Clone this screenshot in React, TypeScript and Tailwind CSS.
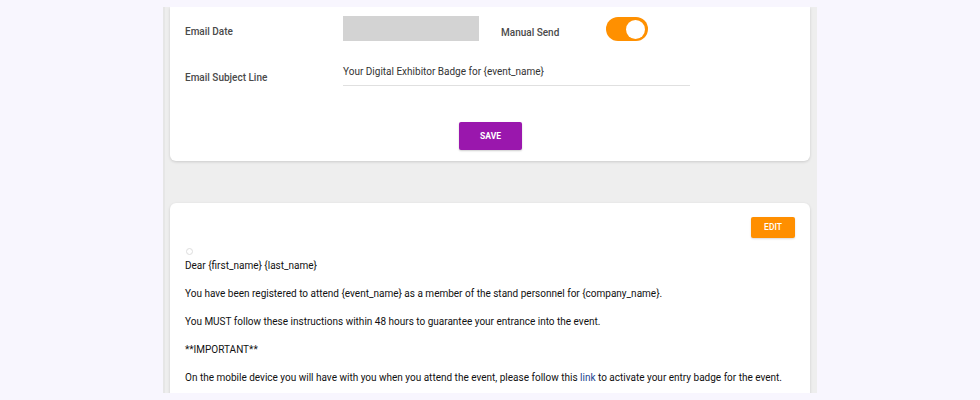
export default function App() {
  return (
    <div className="w-full h-[400px] bg-[#f8f6fe] overflow-hidden" style={{ fontFamily: "Roboto, 'Liberation Sans', sans-serif" }}>
      <div className="ml-[163px] mt-[7px] w-[654px] h-[386px] bg-[#eeeeee] overflow-hidden px-[7px] border-l-[2px] border-[#e6e6e6]">
        <div className="w-[640px] -ml-[2px] h-[154px] bg-white rounded-b-[6px] shadow-[0_1px_3px_rgba(0,0,0,0.15)]">
          <div className="flex items-start pt-[9px] pl-[15px]">
            <div className="w-[158px] text-[10px] leading-[12px] font-medium text-[#4a4a4a] mt-[10px]">Email Date</div>
            <div className="w-[136px] h-[25px] bg-[#d3d3d3]"></div>
            <div className="ml-[22px] w-[105px] text-[10px] leading-[12px] font-medium text-[#4a4a4a] mt-[11px]">Manual Send</div>
            <div className="w-[42px] h-[24px] mt-[1px] rounded-full bg-[#ff9000] flex items-center justify-end pr-[3px]">
              <div className="w-[19px] h-[19px] rounded-full bg-white"></div>
            </div>
          </div>
          <div className="flex items-start pl-[15px] mt-[24px]">
            <div className="w-[158px] text-[10px] leading-[12px] font-medium text-[#4a4a4a] mt-[7px]">Email Subject Line</div>
            <div className="w-[347px] h-[21px] border-b border-[#e0e0e0] text-[10px] text-[#333333] leading-[14px]">Your Digital Exhibitor Badge for {"{event_name}"}</div>
          </div>
          <div className="flex justify-center mt-[36px]">
            <button className="w-[63px] h-[28px] bg-[#9a17ad] text-white text-[8.5px] font-bold rounded-[2px] shadow-[0_1px_2px_rgba(0,0,0,0.2)] ml-[1px]">SAVE</button>
          </div>
        </div>
        <div className="w-[640px] -ml-[2px] mt-[42px] h-[250px] bg-white rounded-t-[6px] shadow-[0_1px_3px_rgba(0,0,0,0.15)] pt-[14px] px-[15px]">
          <div className="flex justify-end">
            <button className="w-[44px] h-[21px] bg-[#ff8f00] text-white text-[8.5px] font-medium rounded-[2px] shadow-[0_1px_2px_rgba(0,0,0,0.15)]">EDIT</button>
          </div>
          <div className="mt-[10px] ml-[1px] w-[7px] h-[7px] rounded-full border border-[#dddddd]"></div>
          <div className="text-[10px] text-[#111111] leading-[16px] flex flex-col gap-[12px] mt-[3px]">
            <p>Dear {"{first_name}"} {"{last_name}"}</p>
            <p>You have been registered to attend {"{event_name}"} as a member of the stand personnel for {"{company_name}"}.</p>
            <p>You MUST follow these instructions within 48 hours to guarantee your entrance into the event.</p>
            <p>**IMPORTANT**</p>
            <p>On the mobile device you will have with you when you attend the event, please follow this <span className="text-[#1b3f8f]">link</span> to activate your entry badge for the event.</p>
          </div>
        </div>
      </div>
    </div>
  );
}
